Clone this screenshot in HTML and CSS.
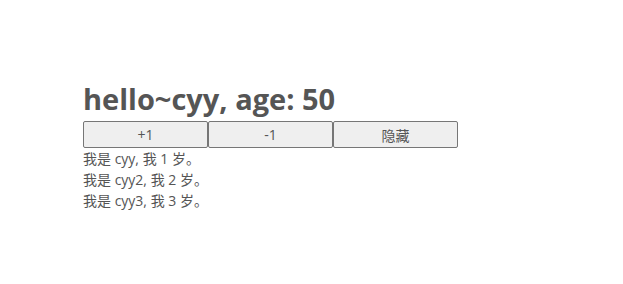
FILE: index.html
```html
<!DOCTYPE html>
<html lang="zh">
<head>
<meta charset="utf-8">
<title>demo</title>
<link rel="stylesheet" href="styles.css">
</head>
<body>
<div class="app">
  <h1 class="title">hello~cyy, age: 50</h1>
  <div class="actions">
    <button class="btn">+1</button>
    <button class="btn">-1</button>
    <button class="btn">隐藏</button>
  </div>
  <ul class="list">
    <li>我是 cyy, 我 1 岁。</li>
    <li>我是 cyy2, 我 2 岁。</li>
    <li>我是 cyy3, 我 3 岁。</li>
  </ul>
</div>
</body>
</html>
```
FILE: styles.css
```css
html, body {
  margin: 0;
  background: #fff;
}
body {
  font-family: "Open Sans", "Noto Sans CJK SC", sans-serif;
  color: #555;
  font-size: 14px;
  line-height: 1.5;
}
.app {
  padding: 76px 0 0 83px;
}
.title {
  margin: 0;
  font-size: 29px;
  font-weight: 700;
  line-height: 45px;
  color: #555;
}
.actions {
  display: flex;
}
.btn {
  width: 125px;
  height: 27px;
  padding: 0;
  margin: 0;
  border: 1px solid #767676;
  border-radius: 2px;
  background: #efefef;
  color: #555;
  font-family: "Open Sans", "Noto Sans CJK SC", sans-serif;
  font-size: 14px;
}
.list {
  list-style: none;
  margin: 0;
  padding: 0;
}
.list li {
  line-height: 21px;
}
```
